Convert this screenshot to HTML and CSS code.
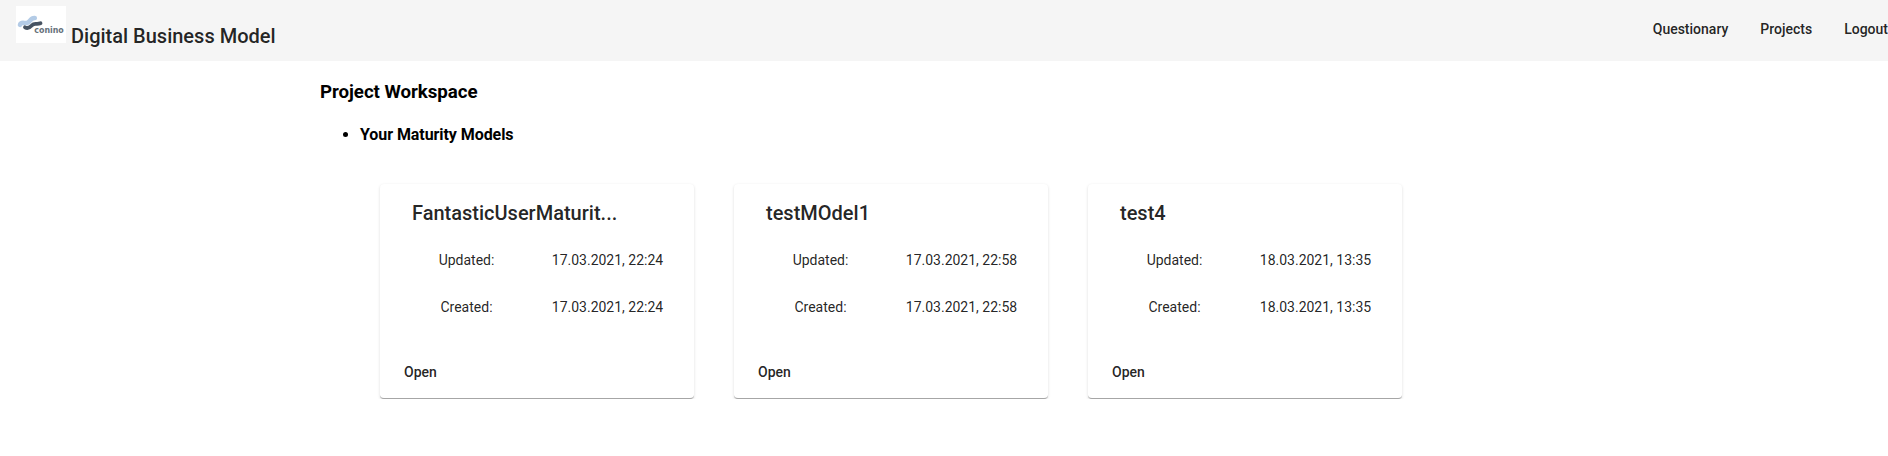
FILE: index.html
```html
<!DOCTYPE html>
<html lang="en">
<head>
<meta charset="utf-8">
<title>Digital Business Model</title>
<link rel="stylesheet" href="styles.css">
</head>
<body>
<header class="toolbar">
  <div class="brand">
    <svg class="logo" viewBox="0 0 50 37" role="img" aria-label="conino">
      <rect width="50" height="37" fill="#fff"/>
      <path d="M4 18.800C5 15.500 8 17.500 11 17C14.500 16 14 11.700 18.800 12" fill="none" stroke="#b3cbe6" stroke-width="4.600" stroke-linecap="round"/>
      <path d="M9 21.300C11.500 22.800 14 21.500 16 19.300C18.500 16.300 20.500 19 24.500 17.200" fill="none" stroke="#465362" stroke-width="3.800" stroke-linecap="round"/>
      <text class="logo-text" x="18.300" y="27" textLength="29.500" lengthAdjust="spacingAndGlyphs">conino</text>
    </svg>
    <h1 class="brand-name">Digital Business Model</h1>
  </div>
  <nav class="nav">
    <a class="nav-link">Questionary</a>
    <a class="nav-link">Projects</a>
    <a class="nav-link">Logout</a>
  </nav>
</header>
<main class="workspace">
  <h3 class="page-title">Project Workspace</h3>
  <ul class="sections">
    <li><h4 class="section-title">Your Maturity Models</h4></li>
  </ul>
  <div class="cards">
    <article class="card">
      <h2 class="card-title">FantasticUserMaturit...</h2>
      <div class="facts">
        <span>Updated:</span><span>17.03.2021, 22:24</span>
        <span>Created:</span><span>17.03.2021, 22:24</span>
      </div>
      <a class="open">Open</a>
    </article>
    <article class="card">
      <h2 class="card-title">testMOdel1</h2>
      <div class="facts">
        <span>Updated:</span><span>17.03.2021, 22:58</span>
        <span>Created:</span><span>17.03.2021, 22:58</span>
      </div>
      <a class="open">Open</a>
    </article>
    <article class="card">
      <h2 class="card-title">test4</h2>
      <div class="facts">
        <span>Updated:</span><span>18.03.2021, 13:35</span>
        <span>Created:</span><span>18.03.2021, 13:35</span>
      </div>
      <a class="open">Open</a>
    </article>
  </div>
</main>
</body>
</html>
```
FILE: styles.css
```css
* { box-sizing: border-box; }
body {
  margin: 0;
  background: #fff;
  font-family: Roboto, "Liberation Sans", sans-serif;
  overflow: hidden;
}
h1, h2, h3, h4, ul { margin: 0; padding: 0; }
.toolbar {
  display: flex;
  justify-content: space-between;
  height: 61px;
  padding-left: 16px;
  background: #f5f5f5;
  color: rgba(0, 0, 0, .87);
}
.brand { display: flex; gap: 5px; padding-top: 6px; }
.logo { width: 50px; height: 37px; }
.logo-text { font: 700 8.500px "DejaVu Sans", sans-serif; fill: #66717b; }
.brand-name { font-size: 20px; font-weight: 500; line-height: 24px; padding-top: 18px; white-space: nowrap; }
.nav { display: flex; gap: 32px; padding-top: 11px; }
.nav-link { font-size: 14px; font-weight: 500; line-height: 36px; }
.workspace { padding: 20px 0 0 320px; color: #000; }
.page-title { font-size: 18.720px; font-weight: 700; line-height: 22px; letter-spacing: -.05px; }
.sections { padding: 22px 0 0 40px; }
.section-title { font-size: 16px; font-weight: 700; line-height: 20px; letter-spacing: -.07px; }
.sections li { font-size: 16px; line-height: 20px; }
.cards { display: flex; gap: 40px; padding: 39px 0 0 60px; }
.card {
  display: flex;
  flex-direction: column;
  width: 314px;
  height: 215px;
  padding: 13px 16px 0;
  border-bottom: 1px solid #a6a6a6;
  border-radius: 4px;
  background: #fff;
  color: rgba(0, 0, 0, .87);
  box-shadow: 0 1px 3px rgba(0, 0, 0, .14);
}
.card-title {
  padding: 0 16px;
  font-size: 20px;
  font-weight: 500;
  line-height: 32px;
  white-space: nowrap;
}
.facts {
  display: grid;
  grid-template-columns: 141px 141px;
  grid-auto-rows: 47px;
  padding-top: 8px;
  font-size: 14px;
  line-height: 47px;
  text-align: center;
}
.open { padding: 23px 0 0 8px; font-size: 14px; font-weight: 500; line-height: 36px; }
```
